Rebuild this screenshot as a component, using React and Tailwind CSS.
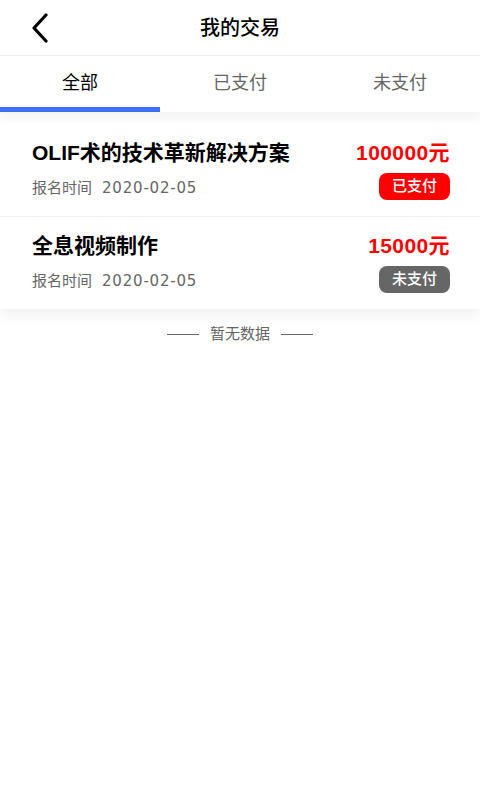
import React from 'react';

const orders = [
  { id: 1, title: 'OLIF术的技术革新解决方案', price: '100000元', date: '2020-02-05', paid: true },
  { id: 2, title: '全息视频制作', price: '15000元', date: '2020-02-05', paid: false },
];

const tabs = ['全部', '已支付', '未支付'];

function BackIcon() {
  return (
    <svg width="18" height="30" viewBox="0 0 18 30" fill="none">
      <path d="M15 2 L3 15 L15 28" stroke="#000" strokeWidth="3.2" strokeLinecap="round" strokeLinejoin="round" />
    </svg>
  );
}

function OrderRow({ order, last }) {
  return (
    <div className={`flex justify-between pl-8 pr-[30px] pt-[15px] pb-[16px] ${last ? '' : 'border-b border-[#f0f0f0]'}`}>
      <div className="flex flex-col min-w-0">
        <div className="text-[21px] leading-[28px] font-bold text-black">{order.title}</div>
        <div className="mt-[10px] text-[15px] leading-[22px] text-[#666]">
          报名时间
          <span className="ml-[10px] tracking-[0.8px] font-['DejaVu_Sans',sans-serif]">{order.date}</span>
        </div>
      </div>
      <div className="flex flex-col items-end shrink-0">
        <div className="text-[21px] leading-[28px] font-bold text-[#ff0000] tracking-[0.4px]">{order.price}</div>
        <div
          className={`mt-[6px] h-[27px] w-[71px] rounded-lg flex items-center justify-center text-[15px] font-medium text-white ${
            order.paid ? 'bg-[#ff0000]' : 'bg-[#666666]'
          }`}
        >
          {order.paid ? '已支付' : '未支付'}
        </div>
      </div>
    </div>
  );
}

export default function App() {
  return (
    <div
      className="w-[480px] min-h-[800px] bg-white"
      style={{ fontFamily: '"Liberation Sans", "Noto Sans CJK SC", sans-serif' }}
    >
      <div className="relative h-[56px] flex items-center justify-center border-b border-[#eeeeee]">
        <div className="absolute left-[31px] top-[13px]">
          <BackIcon />
        </div>
        <div className="text-[20px] font-medium text-black">我的交易</div>
      </div>

      <div className="relative z-10 flex h-[56px] bg-white shadow-[0_6px_10px_rgba(0,0,0,0.05)]">
        {tabs.map((t, i) => (
          <div key={t} className="relative flex-1 flex items-center justify-center pb-[1px]">
            <span className={`text-[18px] ${i === 0 ? 'text-black' : 'text-[#666]'}`}>{t}</span>
            {i === 0 && <div className="absolute left-0 right-0 bottom-0 h-[5px] bg-[#3d6ff6]" />}
          </div>
        ))}
      </div>

      <div className="mt-[12px] bg-white shadow-[0_6px_14px_rgba(0,0,0,0.06)]">
        {orders.map((o, i) => (
          <OrderRow key={o.id} order={o} last={i === orders.length - 1} />
        ))}
      </div>

      <div className="mt-[14px] flex items-center justify-center gap-[11px] text-[15px] leading-[22px] text-[#666]">
        <div className="w-[32px] h-px bg-[#666]" />
        <span>暂无数据</span>
        <div className="w-[32px] h-px bg-[#666]" />
      </div>
    </div>
  );
}
